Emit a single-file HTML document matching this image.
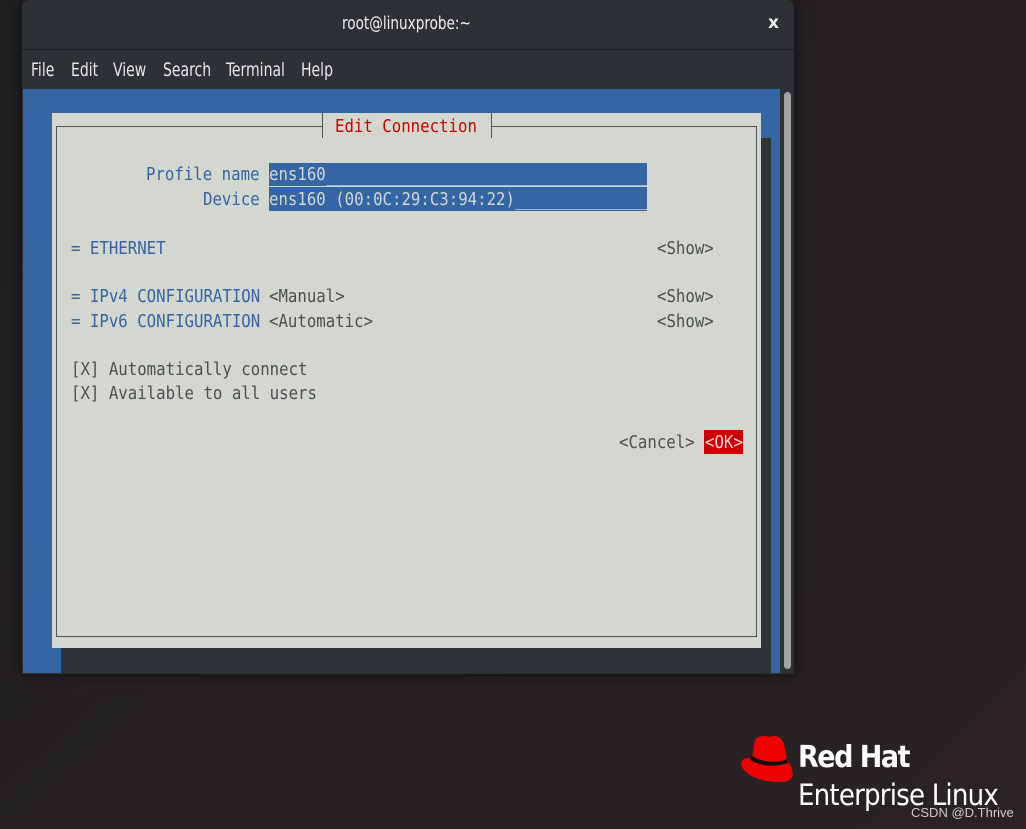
<!DOCTYPE html>
<html><head><meta charset="utf-8"><style>
*{margin:0;padding:0;box-sizing:border-box}
body{width:1026px;height:829px;overflow:hidden;position:relative;background:linear-gradient(135deg,#1f1e20 0%,#262224 50%,#2a2224 100%);font-family:"DejaVu Sans Mono",monospace}
.a{position:absolute}
.t{position:absolute;font-family:"DejaVu Sans Mono",monospace;font-size:18px;line-height:24px;height:24px;white-space:pre;transform:scaleX(0.873);transform-origin:0 50%}
.b{color:#3465a4}.g{color:#4a4f50}
.m{position:absolute;top:59px;font-family:"DejaVu Sans Condensed","DejaVu Sans",sans-serif;font-size:19px;color:#e8e8e8;transform:scaleX(0.82);transform-origin:0 50%;white-space:pre}
</style></head><body>
<div class="a" style="left:22px;top:0;width:772px;height:674px;background:#2d3134;border-radius:6px 6px 0 0;box-shadow:0 0 14px rgba(0,0,0,.6)"></div>
<div class="a" style="left:22px;top:49px;width:772px;height:1px;background:#1d1f21"></div>
<div class="a" style="left:342px;top:13px;font-family:'DejaVu Sans Condensed','DejaVu Sans',sans-serif;font-size:18px;color:#eee;transform:scaleX(0.84);transform-origin:0 50%;white-space:pre">root@linuxprobe:~</div>
<div class="a" style="left:768px;top:13px;font-family:'DejaVu Sans',sans-serif;font-size:17px;color:#eee;font-weight:bold">x</div>
<div class="m" style="left:31px">File</div>
<div class="m" style="left:71px">Edit</div>
<div class="m" style="left:113px">View</div>
<div class="m" style="left:163px">Search</div>
<div class="m" style="left:226px">Terminal</div>
<div class="m" style="left:301px">Help</div>
<div class="a" style="left:23px;top:89px;width:757px;height:584px;background:#3465a4"></div>
<div class="a" style="left:780px;top:89px;width:14px;height:584px;background:#2d3134"></div>
<div class="a" style="left:784px;top:92px;width:7px;height:577px;background:#a3a5a4;border-radius:4px"></div>
<div class="a" style="left:761px;top:138px;width:10px;height:535px;background:#2e3436"></div>
<div class="a" style="left:61px;top:648px;width:710px;height:25px;background:#2e3436"></div>
<div class="a" style="left:52px;top:113px;width:709px;height:535px;background:#d3d7cf"></div>
<div class="a" style="left:56px;top:126px;width:701px;height:511px;border:1.5px solid #4e5453"></div>
<div class="a" style="left:322px;top:113px;width:170px;height:25px;background:#d3d7cf;border-left:1.5px solid #4e5453;border-right:1.5px solid #4e5453"></div>
<div class="t" style="left:335px;top:115px;color:#cc0000">Edit Connection</div>
<div class="a" style="left:269px;top:163px;width:378px;height:23px;background:#3465a4"></div>
<div class="a" style="left:269px;top:187px;width:378px;height:24px;background:#3465a4"></div>
<div class="a" style="left:326px;top:185px;width:321px;height:1px;background:#9fb3d0"></div>
<div class="a" style="left:515px;top:209px;width:132px;height:1px;background:#9fb3d0"></div>
<div class="t b" style="left:146px;top:163px">Profile name</div>
<div class="t" style="left:269px;top:163px;color:#d3d7cf">ens160</div>
<div class="t b" style="left:203px;top:188px">Device</div>
<div class="t" style="left:269px;top:188px;color:#d3d7cf">ens160 (00:0C:29:C3:94:22)</div>
<div class="t b" style="left:71px;top:237px">= ETHERNET</div>
<div class="t g" style="left:657px;top:237px">&lt;Show&gt;</div>
<div class="t b" style="left:71px;top:285px">= IPv4 CONFIGURATION</div>
<div class="t g" style="left:269px;top:285px">&lt;Manual&gt;</div>
<div class="t g" style="left:657px;top:285px">&lt;Show&gt;</div>
<div class="t b" style="left:71px;top:310px">= IPv6 CONFIGURATION</div>
<div class="t g" style="left:269px;top:310px">&lt;Automatic&gt;</div>
<div class="t g" style="left:657px;top:310px">&lt;Show&gt;</div>
<div class="t g" style="left:71px;top:358px">[X] Automatically connect</div>
<div class="t g" style="left:71px;top:382px">[X] Available to all users</div>
<div class="t g" style="left:619px;top:431px">&lt;Cancel&gt;</div>
<div class="a" style="left:704px;top:430px;width:39px;height:24px;background:#cc0000"></div>
<div class="t" style="left:705px;top:431px;color:#f0d0d0">&lt;OK&gt;</div>
<svg class="a" style="left:738px;top:732px" width="58" height="54" viewBox="0 0 58 54">
<path d="M17 8 C20 4 26 3 31 5 C37 2 44 5 46 12 L49 28 C40 32 25 32 14 26 Z" fill="#e00"/>
<path d="M9 26 C2 27 1 34 8 40 C18 49 40 52 50 49 C57 46 56 38 49 28 C40 33 24 33 14 26 Z" fill="#e00"/>
<path d="M14 24 C25 31 40 31 49 27 L50 31 C40 35 24 35 12 28 Z" fill="#111"/>
</svg>
<div class="a" style="left:798px;top:740px;font-family:'DejaVu Sans Condensed','DejaVu Sans',sans-serif;font-weight:bold;font-size:30px;letter-spacing:-1.5px;color:#fff">Red Hat</div>
<div class="a" style="left:798px;top:778px;font-family:'DejaVu Sans Condensed','DejaVu Sans',sans-serif;font-size:29px;letter-spacing:-0.8px;color:#fff">Enterprise Linux</div>
<div class="a" style="left:911px;top:805px;font-family:'Liberation Sans',sans-serif;font-size:13px;color:#ccc">CSDN @D.Thrive</div>
</body></html>
